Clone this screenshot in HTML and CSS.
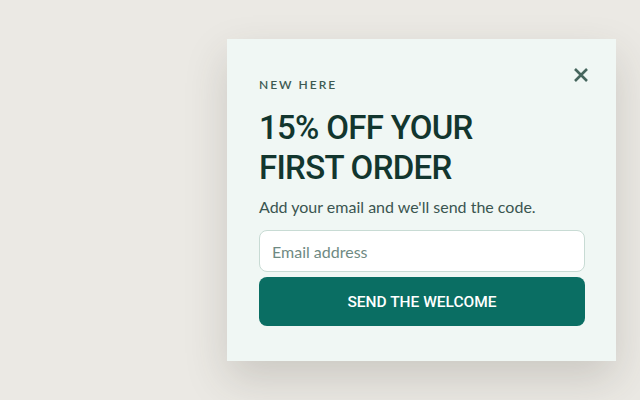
FILE: index.html
```html
<!DOCTYPE html>
<html lang="en">
<head>
  <meta charset="UTF-8" />
  <meta name="viewport" content="width=device-width, initial-scale=1.0"/>
  <title>Welcome offer</title>
  <link rel="stylesheet" href="styles.css">
</head>
<body>
  <div class="popup">
    <button class="close" type="button" aria-label="Close">
      <svg width="16" height="16" viewBox="0 0 16 16"><path d="M2 2 L14 14 M14 2 L2 14" stroke="currentColor" stroke-width="2.6" stroke-linecap="butt"/></svg>
    </button>
    <p class="eyebrow">NEW HERE</p>
    <h1>15% OFF YOUR<br>FIRST ORDER</h1>
    <p class="lead">Add your email and we'll send the code.</p>
    <form class="signup">
      <input type="email" placeholder="Email address">
      <button type="submit">SEND THE WELCOME</button>
    </form>
  </div>
</body>
</html>
```

FILE: styles.css
```css
html, body {
  height: 100%;
}
body {
  margin: 0;
  background-color: #ebe9e4;
  font-family: Lato, "Noto Sans", sans-serif;
  display: flex;
  align-items: center;
  justify-content: flex-end;
  padding-right: 24px;
  box-sizing: border-box;
}
.popup {
  position: relative;
  width: 389px;
  height: 322px;
  box-sizing: border-box;
  background: #f0f7f4;
  padding: 37px 31px 0 32px;
  box-shadow: 0 18px 40px rgba(60, 56, 44, 0.18);
}
.close {
  position: absolute;
  top: 28px;
  right: 27px;
  padding: 0;
  border: none;
  background: none;
  color: #46665d;
  cursor: pointer;
  line-height: 0;
}
.eyebrow {
  margin: 0;
  font-size: 12px;
  font-weight: 600;
  letter-spacing: 2px;
  color: #3d5a52;
  line-height: 18px;
}
h1 {
  margin: 14px 0 0;
  font-family: Roboto, Lato, sans-serif;
  font-size: 33px;
  line-height: 40px;
  font-weight: 500;
  letter-spacing: -0.7px;
  color: #12362e;
}
.lead {
  margin: 7px 0 0;
  font-size: 16px;
  color: #3a5550;
  line-height: 24px;
}
.signup {
  margin-top: 11px;
  display: flex;
  flex-direction: column;
  gap: 5px;
}
.signup input {
  height: 42px;
  box-sizing: border-box;
  border: 1px solid #c8dbd4;
  border-radius: 8px;
  background: #fff;
  padding: 0 12px;
  font-family: inherit;
  font-size: 16px;
  color: #12362e;
}
.signup input::placeholder {
  color: #6f8a83;
}
.signup button {
  height: 49px;
  border: none;
  border-radius: 8px;
  background: #0a6e63;
  color: #fff;
  font-family: Roboto, Lato, sans-serif;
  font-size: 15.5px;
  font-weight: 500;
  cursor: pointer;
}
```
